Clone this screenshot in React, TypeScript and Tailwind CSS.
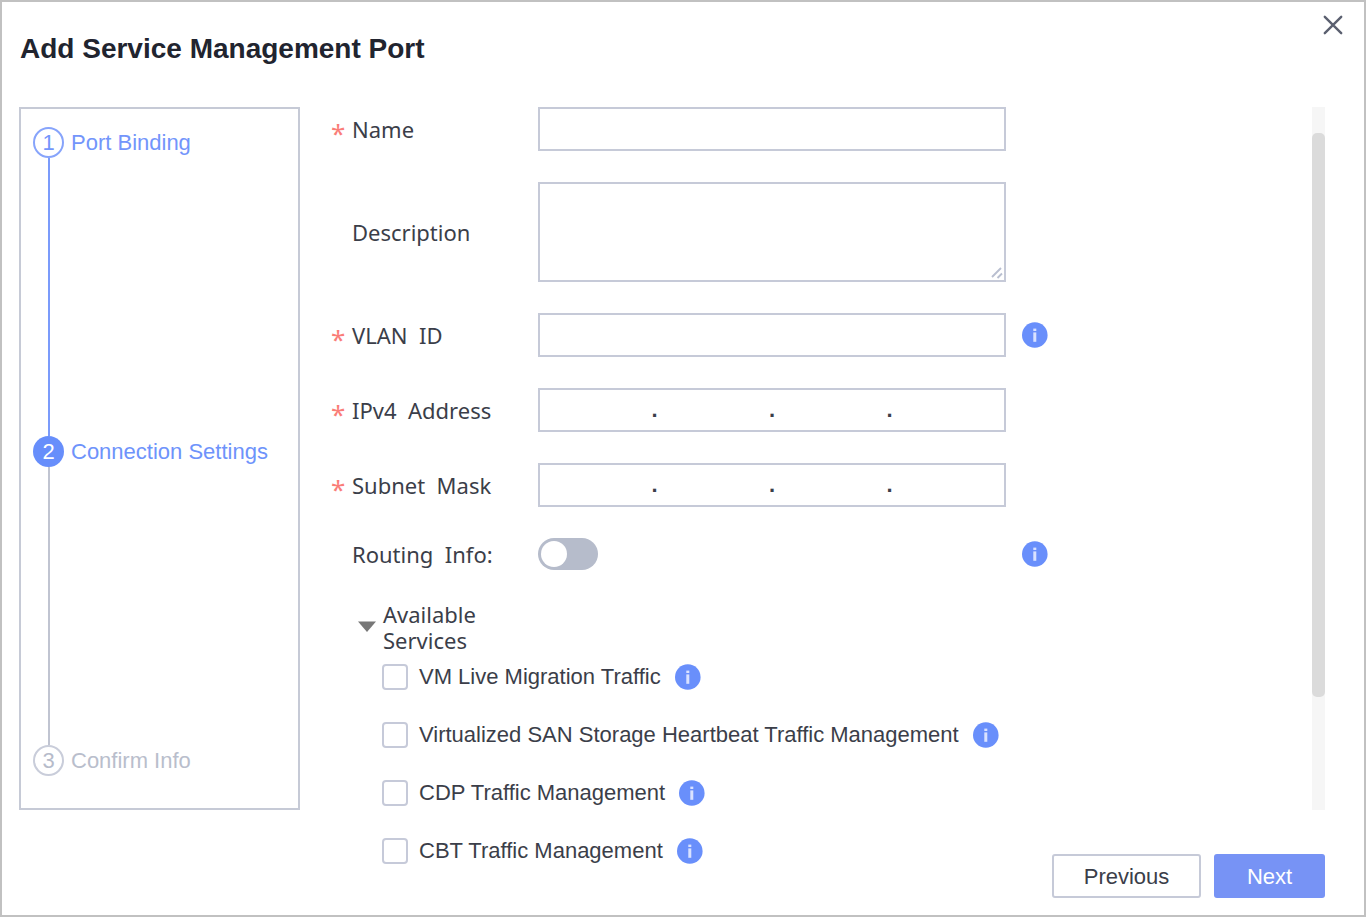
import { Fragment, useId, type ReactNode } from "react";

const LABEL = "font-['Noto_Sans','Open_Sans',sans-serif] text-[22px] leading-[26px] text-[#3b3e49]";
const FIELD = "border-2 border-[#c6cad8] bg-white outline-none focus:border-[#6b90fb]";

function InfoButton({ label }: { label: string }) {
  return (
    <button type="button" aria-label={label} className="shrink-0 cursor-pointer">
      <svg viewBox="0 0 26 26" className="block size-[26px]" aria-hidden="true">
        <circle cx="12.8" cy="13" r="12.8" fill="#698ffb" />
        <rect x="11.3" y="6.6" width="3" height="2.4" fill="#d9e2ff" />
        <rect x="11.3" y="10.4" width="3" height="9.4" fill="#d9e2ff" />
      </svg>
    </button>
  );
}

type RowProps = {
  label: string;
  htmlFor?: string;
  labelId?: string;
  required?: boolean;
  info?: boolean;
  children: ReactNode;
};

function Row({ label, htmlFor, labelId, required, info, children }: RowProps) {
  return (
    <div className="flex items-center">
      <label htmlFor={htmlFor} id={labelId} className={`flex w-[207px] shrink-0 whitespace-pre ${LABEL}`}>
        <span className="h-[26px] w-[21px] pt-1 text-[26px]" aria-hidden="true">
          <span className="text-[#fa7d78]">{required ? "*" : ""}</span>
        </span>
        <span>{label}</span>
      </label>
      <div className="flex min-w-0 flex-1">{children}</div>
      <div className="ml-4 flex w-[26px] shrink-0">{info && <InfoButton label={`About ${label}`} />}</div>
    </div>
  );
}

function AddressRow({ label }: { label: string }) {
  const id = useId();
  return (
    <Row label={label} labelId={id} required>
      <div role="group" aria-labelledby={id} className={`flex h-11 w-full items-center ${FIELD}`}>
        {[1, 2, 3, 4].map((n) => (
          <Fragment key={n}>
            {n > 1 && <span className="w-[6px] shrink-0 text-center font-bold leading-6">.</span>}
            <input aria-label={`${label} part ${n}`} className="h-full min-w-0 flex-1 text-center outline-none" />
          </Fragment>
        ))}
      </div>
    </Row>
  );
}

const STEPS = [
  {
    name: "Port Binding",
    circle: "border-2 border-[#87a4fb] text-[#7395fb]",
    text: "text-[#7395fb]",
    line: "bg-[#7b9bfb]",
  },
  {
    name: "Connection Settings",
    circle: "bg-[#678efb] text-white",
    text: "text-[#6e93fb]",
    line: "bg-[#c0c4d1]",
  },
  { name: "Confirm Info", circle: "border-2 border-[#c9cdda] text-[#b6bbca]", text: "text-[#b9becc]", line: "" },
];

const SERVICES = [
  "VM Live Migration Traffic",
  "Virtualized SAN Storage Heartbeat Traffic Management",
  "CDP Traffic Management",
  "CBT Traffic Management",
];

export default function App() {
  return (
    <div
      role="dialog"
      aria-labelledby="dialog-title"
      className="flex min-h-screen flex-col border-2 border-[#c1c1c1] bg-white pb-[17px] font-['Liberation_Sans',Arial,sans-serif] text-[22px] text-[#3b3e49]"
    >
      <header className="flex items-start justify-between pb-[42px] pl-[18px] pr-[21px] pt-[13px]">
        <h1 id="dialog-title" className="pt-[18px] text-[28px] font-bold leading-8 text-[#21242f]">
          Add Service Management Port
        </h1>
        <button type="button" aria-label="Close" className="cursor-pointer">
          <svg viewBox="0 0 20 20" className="block size-5" fill="none" stroke="#5b6070" strokeWidth="2.4" strokeLinecap="round" aria-hidden="true">
            <path d="M1.8 1.8 18.2 18.2M18.2 1.8 1.8 18.2" />
          </svg>
        </button>
      </header>

      <form
        className="grid flex-1 grid-cols-[281px_minmax(0,1fr)_auto] grid-rows-[1fr_auto] pl-[17px] pr-[39px]"
        onSubmit={(e) => e.preventDefault()}
      >
        <ol className="flex flex-col border-2 border-[#c6cad6] pb-8 pl-3 pt-[18px]">
          {STEPS.map((step) => (
            <li key={step.name} className={step.line ? "flex flex-1 flex-col" : "flex flex-col"}>
              <div className="flex items-center gap-[7px]">
                <span className={`flex size-[31px] shrink-0 items-center justify-center rounded-full leading-none ${step.circle}`}>
                  {STEPS.indexOf(step) + 1}
                </span>
                <span className={`leading-6 ${step.text}`}>{step.name}</span>
              </div>
              {step.line && <div className={`ml-[15px] w-[2px] flex-1 ${step.line}`} />}
            </li>
          ))}
        </ol>

        <div className="row-span-2 flex flex-col gap-[31px] pl-[31px] pr-1">
          <Row label="Name" htmlFor="name" required>
            <input id="name" className={`h-11 w-full px-3 ${FIELD}`} />
          </Row>
          <Row label="Description" htmlFor="description">
            <div className="relative w-full">
              <textarea id="description" className={`block h-[100px] w-full resize-none px-3 py-2 ${FIELD}`} />
              <svg
                viewBox="0 0 12 12"
                className="pointer-events-none absolute bottom-[3px] right-[3px] size-3"
                stroke="#b9bfd0"
                strokeWidth="1.9"
                aria-hidden="true"
              >
                <path d="M1 10 10 1M6.5 11 11 6.5" />
              </svg>
            </div>
          </Row>
          <Row label="VLAN  ID" htmlFor="vlan" required info>
            <input id="vlan" className={`h-11 w-full px-3 ${FIELD}`} />
          </Row>
          <AddressRow label="IPv4  Address" />
          <AddressRow label="Subnet  Mask" />
          <Row label="Routing  Info:" htmlFor="routing" info>
            <input
              id="routing"
              type="checkbox"
              role="switch"
              className="h-8 w-[60px] cursor-pointer appearance-none rounded-full bg-[#b6bccb] p-[3px] before:block before:size-[26px] before:rounded-full before:bg-white checked:bg-[#698ffb] checked:before:ml-7"
            />
          </Row>

          <section>
            <button type="button" aria-expanded="true" className="ml-[27px] flex cursor-pointer items-center gap-[7px] text-left">
              <svg viewBox="0 0 18 12" className="h-3 w-[18px] shrink-0" aria-hidden="true">
                <path d="M0 .5h18L9 11z" fill="#777777" />
              </svg>
              <span className={`w-[120px] ${LABEL}`}>Available Services</span>
            </button>
            <ul className="ml-[51px] mt-[11px] flex flex-col gap-8">
              {SERVICES.map((service) => (
                <li key={service} className="flex items-center gap-[14px]">
                  <label className="flex cursor-pointer items-center gap-[11px] whitespace-nowrap leading-[26px]">
                    <input
                      type="checkbox"
                      className="size-[26px] shrink-0 appearance-none rounded-[4px] border-2 border-[#c6cad9] bg-white checked:bg-[#698ffb]"
                    />
                    {service}
                  </label>
                  <InfoButton label={`About ${service}`} />
                </li>
              ))}
            </ul>
          </section>
        </div>

        <div className="flex w-[13px] flex-col justify-self-end bg-[#f6f6f6] pt-[26px]">
          <div className="h-5/6 rounded-[5px] bg-[#dbdbdb]" />
        </div>

        <div className="col-start-3 flex gap-[13px] pt-[44px]">
          <button type="button" className="h-11 w-[149px] cursor-pointer rounded-[3px] border-2 border-[#c6cad8] bg-white">
            Previous
          </button>
          <button type="submit" className="h-11 w-[111px] cursor-pointer rounded-[3px] bg-[#7793f5] text-white">
            Next
          </button>
        </div>
      </form>
    </div>
  );
}
